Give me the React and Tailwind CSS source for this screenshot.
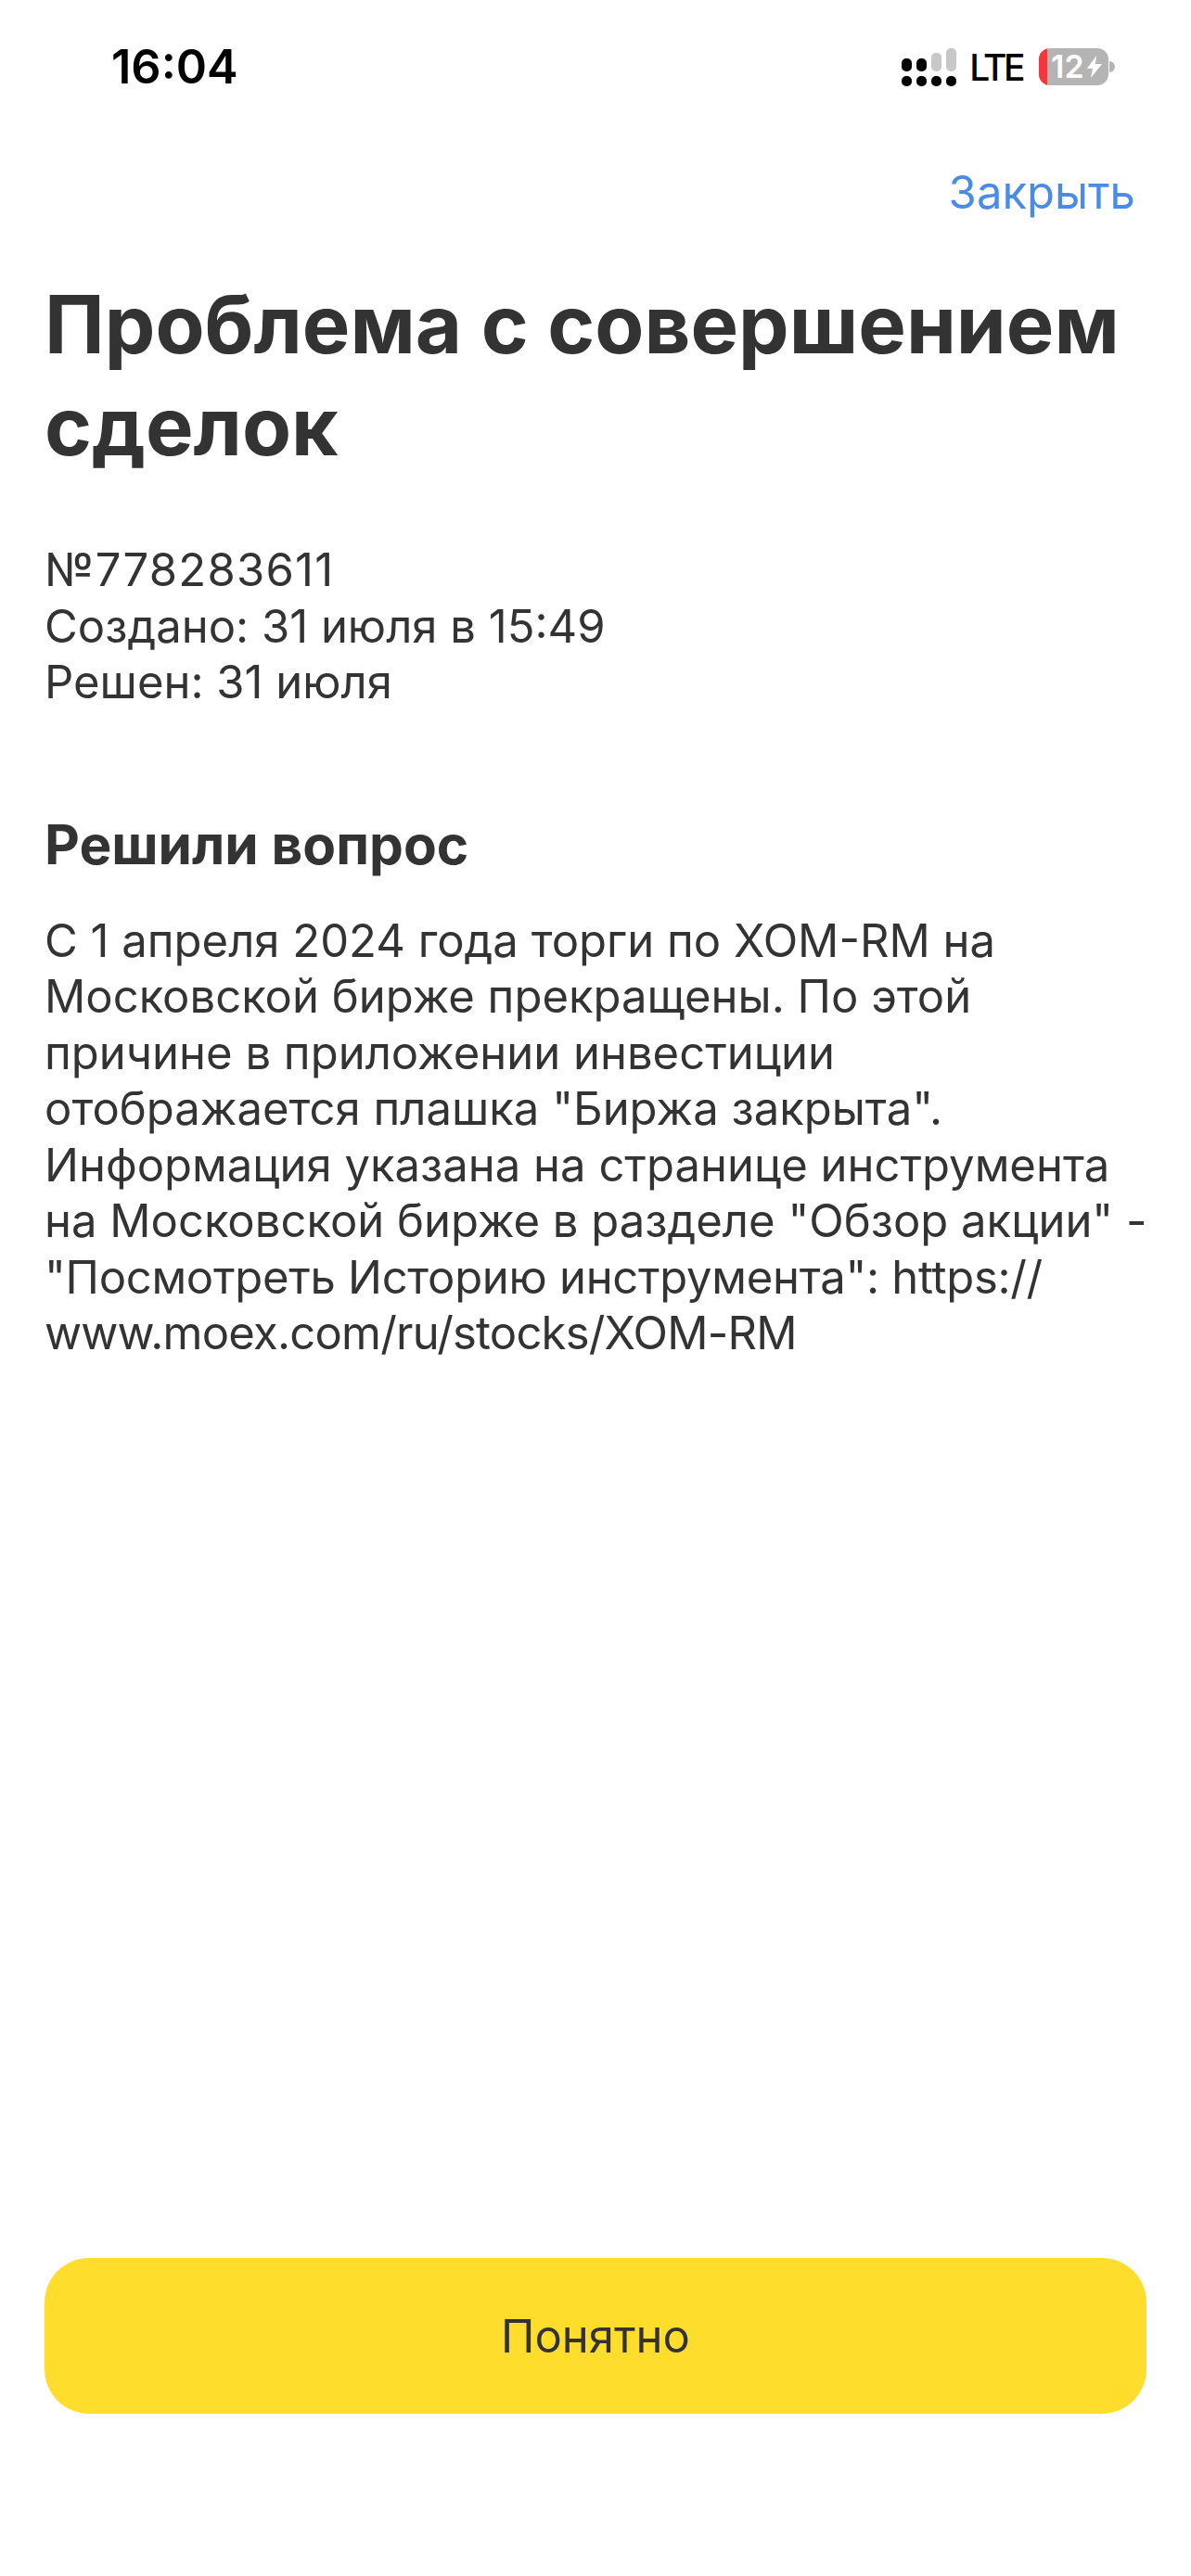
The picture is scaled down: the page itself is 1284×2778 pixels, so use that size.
const Dots = () => (
  <svg width="59" height="41" viewBox="0 0 59 41" className="block">
    <rect x="0" y="30" width="11" height="11" rx="5" fill="#000" />
    <rect x="0" y="11" width="11" height="14" rx="5" fill="#000" />
    <rect x="16" y="30" width="11" height="11" rx="5" fill="#000" />
    <rect x="16" y="11" width="11" height="14" rx="5" fill="#000" />
    <rect x="32" y="30" width="11" height="11" rx="5" fill="#000" />
    <rect x="32" y="5" width="11" height="20" rx="5" fill="#c8c8c8" />
    <rect x="48" y="30" width="11" height="11" rx="5" fill="#000" />
    <rect x="48" y="0" width="11" height="25" rx="5" fill="#c8c8c8" />
  </svg>
);

const Battery = () => (
  <div className="flex items-center">
    <div className="relative flex h-[40px] w-[75px] items-center overflow-hidden rounded-[12px] bg-[#b4b4b4] pl-[13px]">
      <div className="absolute left-0 top-0 h-full w-[9px] bg-[#f0393f]" />
      <span className="relative text-[34px] font-semibold leading-none text-white">12</span>
      <svg width="16" height="24" viewBox="0 0 16 24" className="relative ml-[3px]">
        <path d="M10 0 0 14h6l-2 10 12-15H9z" fill="#fff" />
      </svg>
    </div>
    <div className="ml-[1px] h-[12px] w-[6px] rounded-r-full bg-[#b4b4b4]" />
  </div>
);

export default function App() {
  return (
    <div className="flex h-[2778px] w-[1284px] flex-col bg-white font-['Inter',sans-serif] text-[#333333]">
      <div className="flex h-[144px] items-center justify-between pl-[120px] pr-[82px]">
        <div className="text-[50.5px] font-semibold leading-none text-black">16:04</div>
        <div className="flex items-center">
          <Dots />
          <span className="ml-[14px] mr-[18px] text-[39px] font-medium leading-none tracking-[-3.5px] text-black">LTE</span>
          <Battery />
        </div>
      </div>

      <div className="flex justify-end pr-[60px] pt-[34px]">
        <button className="text-[49px] leading-[60px] text-[#4a8be8]">Закрыть</button>
      </div>

      <div className="flex flex-1 flex-col px-[48px]">
        <h1 className="mt-[57px] text-[86.7px] font-bold leading-[110px]">
          Проблема с совершением сделок
        </h1>
        <div className="mt-[70px] text-[49px] leading-[60.5px]">
          <div className="tracking-[1.2px]">№778283611</div>
          <div>Создано: 31 июля в 15:49</div>
          <div>Решен: 31 июля</div>
        </div>
        <h2 className="mt-[109px] text-[58.5px] font-bold leading-[70px]">Решили вопрос</h2>
        <p className="mr-[-8px] mt-[39px] text-[49px] leading-[60.5px]">
          С 1 апреля 2024 года торги по XOM-RM на Московской бирже прекращены. По этой причине в приложении инвестиции отображается плашка "Биржа закрыта". Информация указана на странице инструмента на Московской бирже в разделе "Обзор акции" - <span className="tracking-[-0.3px]">"Посмотреть Историю инструмента": https://</span> <span className="tracking-[-0.8px]">www.moex.com/ru/stocks/XOM-RM</span>
        </p>
        <button className="mb-[175px] mt-auto flex h-[168px] w-full items-center justify-center rounded-[48px] bg-[#ffdd2d] pt-[2px] text-[49px]">
          Понятно
        </button>
      </div>
    </div>
  );
}
